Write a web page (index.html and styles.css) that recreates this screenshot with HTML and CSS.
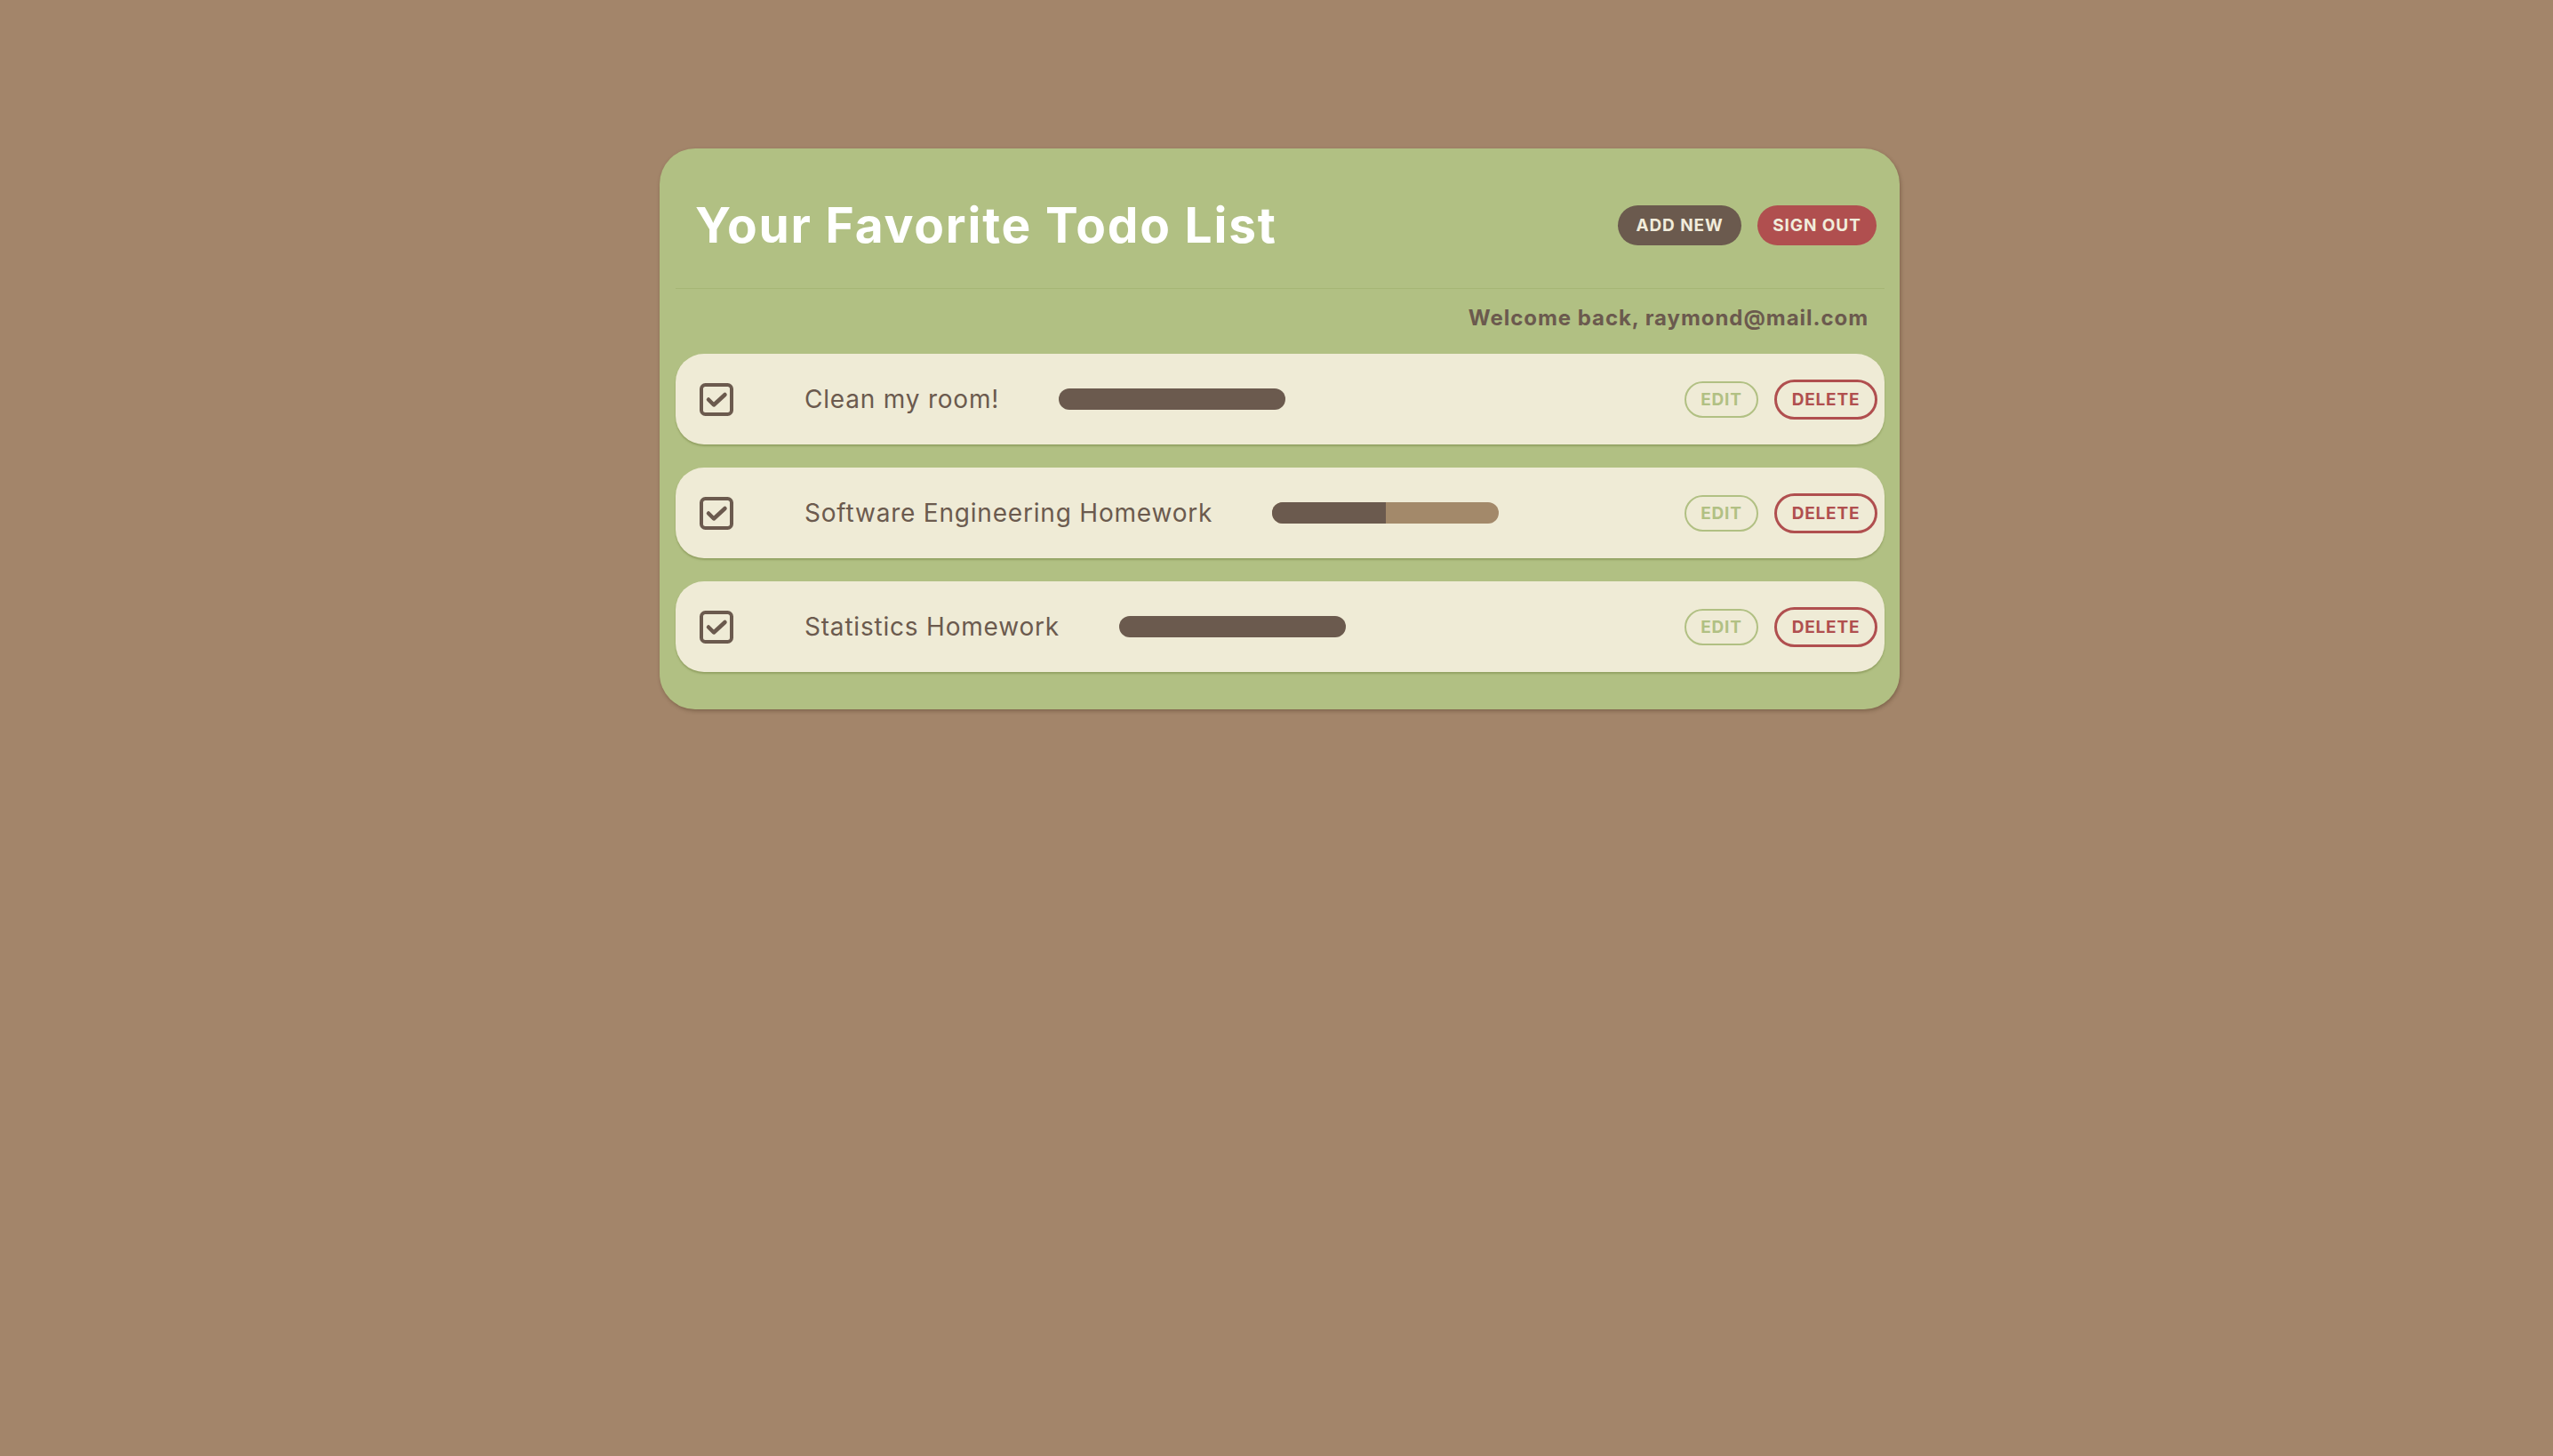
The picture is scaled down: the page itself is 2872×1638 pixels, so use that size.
FILE: index.html
```html
<!DOCTYPE html>
<html lang="en">
<head>
<meta charset="utf-8">
<title>Your Favorite Todo List</title>
<link rel="stylesheet" href="styles.css">
</head>
<body>
<main class="card">
  <header class="card-header">
    <h1 class="title">Your Favorite Todo List</h1>
    <div class="header-actions">
      <button class="pill pill-dark">ADD NEW</button>
      <button class="pill pill-red">SIGN OUT</button>
    </div>
  </header>
  <p class="welcome">Welcome back, raymond@mail.com</p>
  <ul class="todo-list">
    <li class="todo">
      <svg class="check" viewBox="0 0 38 37" width="38" height="37"><rect x="2" y="2" width="34" height="33" rx="4.5"/><polyline points="10,18.5 16,24.5 28.5,13"/></svg>
      <span class="todo-text">Clean my room!</span>
      <div class="bar"><div class="bar-fill" style="width:100%"></div></div>
      <div class="todo-actions">
        <button class="outline outline-green">EDIT</button>
        <button class="outline outline-red">DELETE</button>
      </div>
    </li>
    <li class="todo">
      <svg class="check" viewBox="0 0 38 37" width="38" height="37"><rect x="2" y="2" width="34" height="33" rx="4.5"/><polyline points="10,18.5 16,24.5 28.5,13"/></svg>
      <span class="todo-text">Software Engineering Homework</span>
      <div class="bar"><div class="bar-fill" style="width:50%"></div></div>
      <div class="todo-actions">
        <button class="outline outline-green">EDIT</button>
        <button class="outline outline-red">DELETE</button>
      </div>
    </li>
    <li class="todo">
      <svg class="check" viewBox="0 0 38 37" width="38" height="37"><rect x="2" y="2" width="34" height="33" rx="4.5"/><polyline points="10,18.5 16,24.5 28.5,13"/></svg>
      <span class="todo-text">Statistics Homework</span>
      <div class="bar"><div class="bar-fill" style="width:100%"></div></div>
      <div class="todo-actions">
        <button class="outline outline-green">EDIT</button>
        <button class="outline outline-red">DELETE</button>
      </div>
    </li>
  </ul>
</main>
</body>
</html>
```
FILE: styles.css
```css
* { box-sizing: border-box; }

html, body {
  margin: 0;
  padding: 0;
}

body {
  background: #a3856a;
  font-family: Inter, "Open Sans", "Liberation Sans", sans-serif;
  color: #6b5a4e;
  min-height: 1638px;
  padding: 167px 0 0 7px;
}

.card {
  width: 1395px;
  margin: 0 auto;
  background: #b1c083;
  border-radius: 40px;
  padding: 0 17px 42px 18px;
  box-shadow: 1px 2px 4px rgba(60, 40, 20, 0.35);
}

.card-header {
  display: flex;
  align-items: center;
  justify-content: space-between;
  height: 158px;
  padding: 15px 9px 0 22px;
  border-bottom: 1px solid #a6b676;
}

.title {
  margin: 0;
  font-size: 55px;
  font-weight: 700;
  letter-spacing: 1.8px;
  color: #ffffff;
  line-height: 1.2;
}

.header-actions {
  display: flex;
  gap: 18px;
}

.pill {
  border: none;
  border-radius: 23px;
  height: 45px;
  padding: 0;
  font-family: inherit;
  font-size: 19px;
  font-weight: 700;
  letter-spacing: 0.9px;
  color: #f1ecdb;
}

.pill-dark { background: #6b5a4e; width: 139px; }
.pill-red { background: #b04f4f; width: 134px; }

.welcome {
  margin: 0;
  padding: 18px 18px 0 0;
  text-align: right;
  font-size: 24px;
  font-weight: 700;
  letter-spacing: 0.95px;
  line-height: 30px;
  color: #6b5a4e;
}

.todo-list {
  list-style: none;
  margin: 25px 0 0;
  padding: 0;
  display: flex;
  flex-direction: column;
  gap: 26px;
}

.todo {
  display: flex;
  align-items: center;
  height: 102px;
  background: #efebd6;
  border-radius: 32px;
  padding: 0 8px 0 27px;
  box-shadow: 0 2px 2px rgba(110, 125, 60, 0.45);
}

.check {
  flex: none;
  fill: none;
  stroke: #6b5a4e;
  stroke-width: 4;
  stroke-linecap: round;
  stroke-linejoin: round;
}

.check polyline { stroke-width: 4.5; }

.todo-text {
  margin-left: 80px;
  font-size: 28px;
  font-weight: 400;
  letter-spacing: 0.8px;
  color: #6b5a4e;
}

.bar {
  flex: none;
  width: 255px;
  height: 24px;
  margin-left: 67px;
  border-radius: 12px;
  background: #a3896a;
  overflow: hidden;
}

.bar-fill {
  height: 100%;
  background: #6b5a4e;
}

.todo-actions {
  margin-left: auto;
  display: flex;
  align-items: center;
  gap: 18px;
}

.outline {
  background: transparent;
  font-family: inherit;
  font-size: 19px;
  font-weight: 700;
  letter-spacing: 0.8px;
  border-radius: 23px;
  padding: 0;
}

.outline-green {
  width: 83px;
  height: 41px;
  border: 2px solid #b1c083;
  color: #b1c083;
}

.outline-red {
  width: 116px;
  height: 45px;
  border: 3px solid #b04f4f;
  color: #b04f4f;
}
```
